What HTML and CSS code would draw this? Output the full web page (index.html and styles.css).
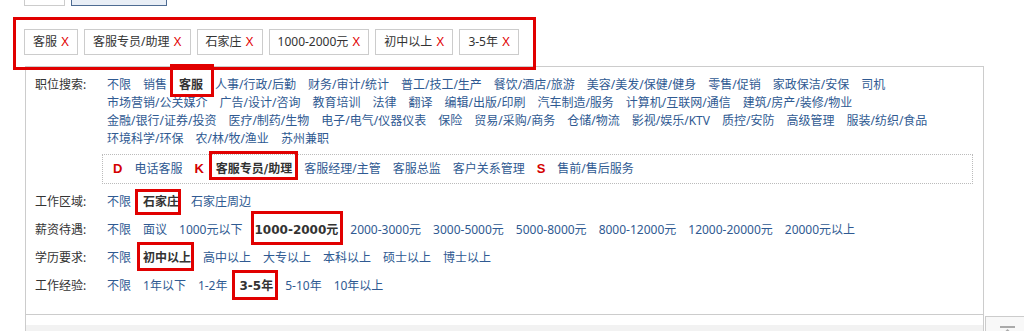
FILE: index.html
```html
<!DOCTYPE html>
<html lang="zh-CN">
    <head>
        <meta charset="UTF-8">
        <meta name="viewport" content="width=device-width, initial-scale=1.0">
        <link rel="stylesheet" href="styles.css">
        <title>职位搜索</title>
    </head>

    <body>
    <div class="wrap">
        <div class="tabs">
            <span class="tab"></span>
            <span class="tab tab-on"></span>
        </div>

        <!-- 已选条件 -->
        <div class="picked">
            <span class="tag">客服<b>X</b></span>
            <span class="tag">客服专员/助理<b>X</b></span>
            <span class="tag">石家庄<b>X</b></span>
            <span class="tag">1000-2000元<b>X</b></span>
            <span class="tag">初中以上<b>X</b></span>
            <span class="tag">3-5年<b>X</b></span>
        </div>

        <div class="panel">
            <div class="filter">
                <div class="row">
                    <span class="label">职位搜索:</span>
                    <div class="opts">
                        <a href="#">不限</a>
                        <a href="#">销售</a>
                        <a href="#" class="sel sel-job">客服</a>
                        <a href="#">人事/行政/后勤</a>
                        <a href="#">财务/审计/统计</a>
                        <a href="#">普工/技工/生产</a>
                        <a href="#">餐饮/酒店/旅游</a>
                        <a href="#">美容/美发/保健/健身</a>
                        <a href="#">零售/促销</a>
                        <a href="#">家政保洁/安保</a>
                        <a href="#">司机</a>
                        <a href="#">市场营销/公关媒介</a>
                        <a href="#">广告/设计/咨询</a>
                        <a href="#">教育培训</a>
                        <a href="#">法律</a>
                        <a href="#">翻译</a>
                        <a href="#">编辑/出版/印刷</a>
                        <a href="#">汽车制造/服务</a>
                        <a href="#">计算机/互联网/通信</a>
                        <a href="#">建筑/房产/装修/物业</a>
                        <a href="#">金融/银行/证券/投资</a>
                        <a href="#">医疗/制药/生物</a>
                        <a href="#">电子/电气/仪器仪表</a>
                        <a href="#">保险</a>
                        <a href="#">贸易/采购/商务</a>
                        <a href="#">仓储/物流</a>
                        <a href="#">影视/娱乐/KTV</a>
                        <a href="#">质控/安防</a>
                        <a href="#">高级管理</a>
                        <a href="#">服装/纺织/食品</a>
                        <a href="#">环境科学/环保</a>
                        <a href="#">农/林/牧/渔业</a>
                        <a href="#">苏州兼职</a>
                    </div>
                </div>

                <div class="sub">
                    <span class="letter">D</span>
                    <a href="#">电话客服</a>
                    <span class="letter">K</span>
                    <a href="#" class="sel sel-sub">客服专员/助理</a>
                    <a href="#">客服经理/主管</a>
                    <a href="#">客服总监</a>
                    <a href="#">客户关系管理</a>
                    <span class="letter">S</span>
                    <a href="#">售前/售后服务</a>
                </div>

                <div class="row">
                    <span class="label">工作区域:</span>
                    <div class="opts">
                        <a href="#">不限</a>
                        <a href="#" class="sel sel-area">石家庄</a>
                        <a href="#">石家庄周边</a>
                    </div>
                </div>

                <div class="row">
                    <span class="label">薪资待遇:</span>
                    <div class="opts">
                        <a href="#">不限</a>
                        <a href="#">面议</a>
                        <a href="#">1000元以下</a>
                        <a href="#" class="sel sel-pay">1000-2000元</a>
                        <a href="#">2000-3000元</a>
                        <a href="#">3000-5000元</a>
                        <a href="#">5000-8000元</a>
                        <a href="#">8000-12000元</a>
                        <a href="#">12000-20000元</a>
                        <a href="#">20000元以上</a>
                    </div>
                </div>

                <div class="row">
                    <span class="label">学历要求:</span>
                    <div class="opts">
                        <a href="#">不限</a>
                        <a href="#" class="sel sel-edu">初中以上</a>
                        <a href="#">高中以上</a>
                        <a href="#">大专以上</a>
                        <a href="#">本科以上</a>
                        <a href="#">硕士以上</a>
                        <a href="#">博士以上</a>
                    </div>
                </div>

                <div class="row">
                    <span class="label">工作经验:</span>
                    <div class="opts">
                        <a href="#">不限</a>
                        <a href="#">1年以下</a>
                        <a href="#">1-2年</a>
                        <a href="#" class="sel sel-exp">3-5年</a>
                        <a href="#">5-10年</a>
                        <a href="#">10年以上</a>
                    </div>
                </div>
            </div>

            <div class="list">
                <div class="list-head"></div>
            </div>
        </div>
    </div>

    <a href="#" class="to-top">
        <svg width="39" height="15" viewBox="0 0 39 15">
            <rect x="14" y="9" width="15" height="2" fill="#aaa"/>
            <polygon points="21.5,12 18.5,15 24.5,15" fill="#aaa"/>
        </svg>
    </a>
    </body>
</html>
```

FILE: styles.css
```css
* { box-sizing: border-box; }

html, body { margin: 0; overflow: hidden; }

body {
    background-color: #fff; color: #333;
    font: 12px/18px "Noto Sans", "Noto Sans CJK SC", "Microsoft YaHei", sans-serif;
}

a { color: #2f5a92; text-decoration: none; white-space: nowrap; }

.wrap { width: 960px; margin-left: 24px; }

/* top tabs, only their bottom edge shows */
.tabs { display: flex; gap: 6px; margin-top: -14px; }
.tab { width: 41px; height: 20px; border: 1px solid #ccc; background: #fff; }
.tab-on { width: 96px; background: #e8eef6; border-color: #4d6b92; }

/* picked conditions */
.picked {
    position: relative; display: flex; gap: 6px;
    margin-top: 23px; width: fit-content;
}
.picked::after {
    content: ""; position: absolute;
    left: -11px; top: -12px; width: 517px; height: 47px;
    border: 3px solid #e10000;
}
.tag {
    height: 26px; line-height: 24px; padding: 0 8px;
    border: 1px solid #ccc; background: #fff; color: #333;
}
.tag b {
    margin-left: 4px; color: #e10000; font-weight: normal;
    font-family: "Liberation Sans", Arial, sans-serif;
}

.panel {
    width: 959px; margin: 11px 0 0 1px;
    border: 1px solid #ccc; border-bottom: none;
}

.filter { padding: 4px 10px 14px 9px; border-bottom: 1px solid #ccc; }

.row { display: flex; padding: 5px 0; }
.label { flex: none; width: 72px; color: #333; }
.opts { display: flex; flex-wrap: wrap; column-gap: 12px; }

.sub {
    display: flex; column-gap: 12px;
    margin: 1px 0 4px 67px; padding: 5px 10px;
    border: 1px dotted #bbb;
}
.letter {
    color: #d40000; font: bold 13px/18px "Liberation Sans", Arial, sans-serif;
}

/* selected option + red mark round it */
.sel {
    position: relative; color: #333; font-weight: bold;
    font-family: "DejaVu Sans", "Noto Sans CJK SC", sans-serif;
}
.sel::after { content: ""; position: absolute; border: 3px solid #e10000; }
.sel-job::after { left: -9px; right: -11px; top: -12px; bottom: -3px; }
.sel-sub::after { left: -7px; right: -6px; top: -9px; bottom: -2px; }
.sel-area::after { left: -8px; right: -2px; top: -4px; bottom: -4px; }
.sel-pay::after { left: -4px; right: -5px; top: -10px; bottom: -6px; }
.sel-edu::after { left: -6px; right: -3px; top: -7px; bottom: -4px; }
.sel-exp::after { left: -7px; right: -5px; top: -7px; bottom: -5px; }

.list { padding-top: 10px; }
.list-head { height: 6px; background: #f2f2f2; }

.to-top {
    position: fixed; left: 985px; top: 316px;
    width: 39px; height: 15px; background: #f8f8f8;
    border: 1px solid #ccc; border-width: 1px 0 0 1px;
}
.to-top svg { display: block; }
```
